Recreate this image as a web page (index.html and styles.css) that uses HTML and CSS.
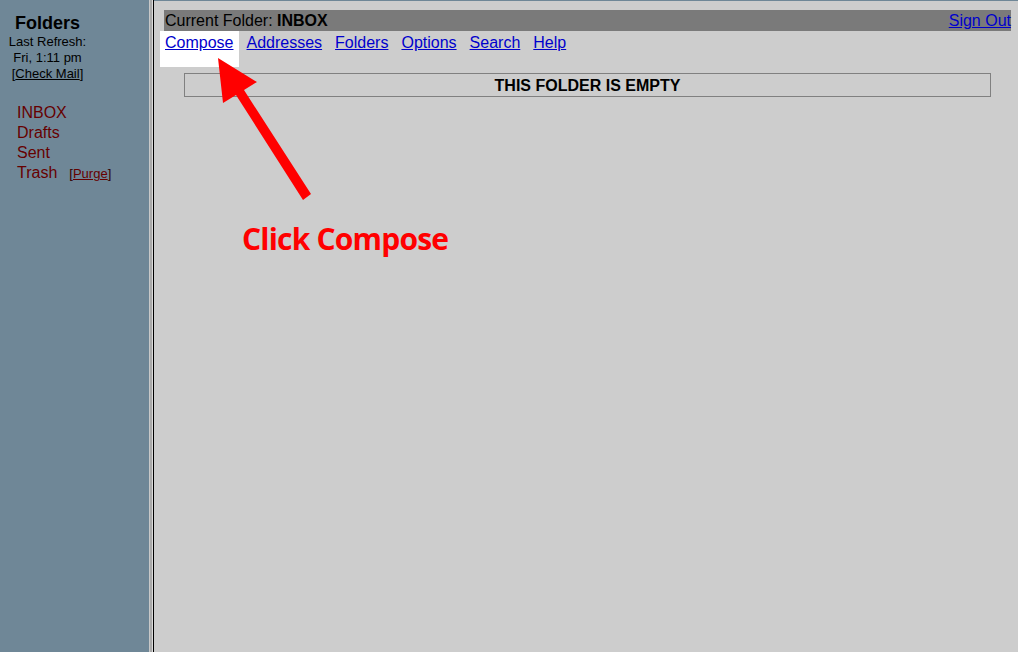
FILE: index.html
```html
<!DOCTYPE html>
<html>
<head>
<meta charset="utf-8">
<link rel="stylesheet" href="styles.css">
</head>
<body>
<div class="page">
  <aside class="sidebar">
    <div class="side-head">
      <div class="side-title">Folders</div>
      <div class="side-small">Last Refresh:</div>
      <div class="side-small">Fri, 1:11 pm</div>
      <div class="side-small">[<a class="check" href="#">Check Mail</a>]</div>
    </div>
    <ul class="folders">
      <li><a href="#">INBOX</a></li>
      <li><a href="#">Drafts</a></li>
      <li><a href="#">Sent</a></li>
      <li><a href="#">Trash</a><span class="purge">[<a href="#">Purge</a>]</span></li>
    </ul>
  </aside>
  <div class="divider"><span class="d1"></span><span class="d2"></span><span class="d3"></span><span class="d4"></span></div>
  <main class="main">
    <div class="topbar">
      <span>Current Folder: <b>INBOX</b></span>
      <a href="#">Sign Out</a>
    </div>
    <nav class="nav">
      <span class="hl"><a class="hl-link" href="#">Compose</a></span>
      <a class="nav-link" href="#">Addresses</a>
      <a class="nav-link" href="#">Folders</a>
      <a class="nav-link" href="#">Options</a>
      <a class="nav-link" href="#">Search</a>
      <a class="nav-link" href="#">Help</a>
    </nav>
    <div class="empty">THIS FOLDER IS EMPTY</div>
  </main>
</div>
<svg class="arrow" width="1018" height="652" viewBox="0 0 1018 652">
  <polygon fill="#ff0000" points="218,58 257,82 244,90 311,194 303,200 236,95 223,103"/>
</svg>
<div class="note">Click Compose</div>
</body>
</html>
```
FILE: styles.css
```css
html, body {
  margin: 0;
  padding: 0;
}
body {
  width: 1018px;
  height: 652px;
  overflow: hidden;
  font-family: "Liberation Sans", Arial, sans-serif;
  background: #cdcdcd;
  position: relative;
}
.page {
  display: flex;
  height: 652px;
}
.sidebar {
  width: 149px;
  background: #6f8797;
  flex: none;
}
.side-head {
  width: 95px;
  text-align: center;
  padding-top: 13px;
}
.side-title {
  font-weight: bold;
  font-size: 18px;
  line-height: 20px;
  margin-bottom: 1px;
}
.side-small {
  font-size: 13px;
  line-height: 16px;
  color: #000;
}
.check {
  color: #000;
}
.folders {
  list-style: none;
  margin: 21px 0 0 0;
  padding: 0 0 0 17px;
}
.folders li {
  font-size: 16px;
  line-height: 20px;
}
.folders a {
  color: #660000;
  text-decoration: none;
}
.purge {
  font-size: 13px;
  margin-left: 12px;
  color: #330000;
}
.purge a {
  color: #660000;
  text-decoration: underline;
}
.divider {
  display: flex;
  flex: none;
}
.d1 { width: 1px; background: #c8c8c8; }
.d2 { width: 2px; background: #a9a9a9; }
.d3 { width: 1px; background: #dcdcdc; }
.d4 { width: 1px; background: #000; }
.main {
  flex: 1;
  border-top: 1px solid #6f8797;
  padding: 9px 7px 0 10px;
  background: #cdcdcd;
}
.topbar {
  display: flex;
  justify-content: space-between;
  align-items: center;
  background: #7a7a7a;
  height: 21px;
  font-size: 16px;
  color: #000;
  padding-left: 1px;
}
.topbar a {
  color: #0000cc;
}
.nav {
  display: flex;
  align-items: flex-start;
  gap: 13px;
  font-size: 16px;
  line-height: 18px;
  padding-left: 1px;
}
.nav-link {
  display: block;
  color: #0000cc;
  padding-top: 3px;
}
.hl {
  display: block;
  background: #fff;
  padding: 3px 6px 15px 5px;
  margin: 0 -6px 0 -5px;
}
.hl-link {
  color: #0000cc;
}
.empty {
  margin: 6px 20px 0 20px;
  border: 1px solid #808080;
  height: 21px;
  padding-top: 1px;
  line-height: 22px;
  text-align: center;
  font-weight: bold;
  font-size: 16px;
}
.arrow {
  position: absolute;
  left: 0;
  top: 0;
}
.note {
  position: absolute;
  left: 242px;
  top: 218px;
  font-family: "Open Sans", "Lato", sans-serif;
  font-weight: bold;
  font-size: 30px;
  letter-spacing: -0.8px;
  color: #ff0000;
}
```
